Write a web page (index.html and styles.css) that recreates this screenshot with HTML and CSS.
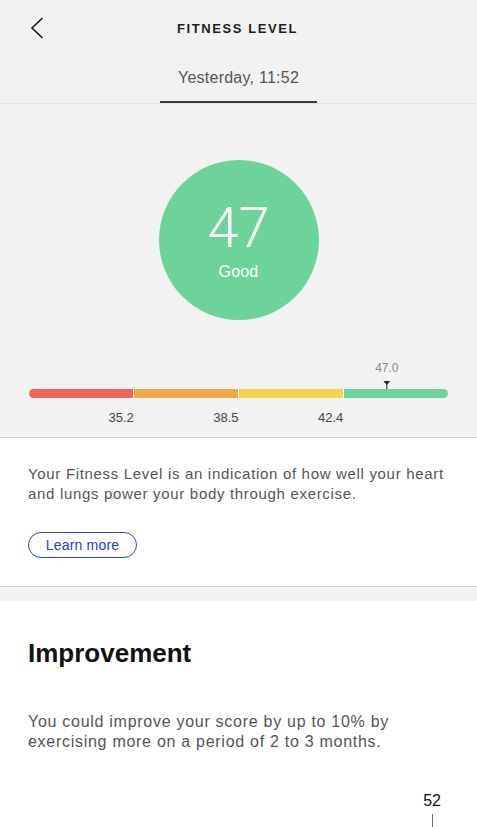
FILE: index.html
```html
<!DOCTYPE html>
<html lang="en">
<head>
<meta charset="utf-8">
<title>Fitness Level</title>
<link rel="stylesheet" href="styles.css">
</head>
<body>
<div class="screen">
  <header class="topbar">
    <button class="back" aria-label="Back">
      <svg width="14" height="22" viewBox="0 0 14 22"><path d="M12.5 1 L2 11 L12.5 21" fill="none" stroke="#1a1a1a" stroke-width="1.6"/></svg>
    </button>
    <h1 class="title">FITNESS LEVEL</h1>
    <span class="spacer"></span>
  </header>

  <nav class="tabs">
    <span class="tab active">Yesterday, 11:52</span>
  </nav>

  <section class="score">
    <div class="circle">
      <span class="value">47</span>
      <span class="grade">Good</span>
    </div>

    <div class="scale">
      <div class="marker-row">
        <div class="marker" style="left: 85.4%">
          <span class="marker-value">47.0</span>
          <svg class="pin" width="7" height="8" viewBox="0 0 7 8"><path d="M0 0 H7 L3.5 4 Z" fill="#222"/><rect x="3" y="3" width="1" height="5" fill="#222"/></svg>
        </div>
      </div>
      <div class="bar">
        <span class="seg red"></span>
        <span class="seg orange"></span>
        <span class="seg yellow"></span>
        <span class="seg green"></span>
      </div>
      <div class="ticks">
        <span>35.2</span>
        <span>38.5</span>
        <span>42.4</span>
        <span></span>
      </div>
    </div>
  </section>

  <section class="card info">
    <p class="text">Your Fitness Level is an indication of how well your heart and lungs power your body through exercise.</p>
    <button class="pill">Learn more</button>
  </section>

  <section class="card improve">
    <h2 class="heading">Improvement</h2>
    <p class="text large">You could improve your score by up to 10% by exercising more on a period of 2 to 3 months.</p>
    <div class="chart">
      <div class="goal">
        <span class="goal-value">52</span>
        <span class="goal-line"></span>
      </div>
    </div>
  </section>
</div>
</body>
</html>
```

FILE: styles.css
```css
* { box-sizing: border-box; }

html, body {
  margin: 0;
  padding: 0;
  background: #f2f2f2;
  font-family: "Liberation Sans", Arial, sans-serif;
  color: #222;
}

.screen {
  width: 477px;
  min-height: 827px;
  overflow: hidden;
}

.topbar {
  height: 56px;
  display: grid;
  grid-template-columns: 60px 1fr 60px;
  align-items: center;
}

.back {
  border: 0;
  background: none;
  padding: 0 0 0 30px;
  height: 56px;
  display: flex;
  align-items: center;
  cursor: pointer;
}

.title {
  margin: 0;
  text-align: center;
  font-size: 13px;
  font-weight: 700;
  letter-spacing: 1.6px;
  padding-right: 2px;
  color: #1e1e1e;
}

.tabs {
  height: 48px;
  display: flex;
  justify-content: center;
  border-bottom: 1px solid #e3e3e3;
}

.tab {
  padding: 12px 18px 0;
  font-size: 16px;
  line-height: 20px;
  letter-spacing: 0.25px;
  color: #555;
  border-bottom: 2px solid #3a3a3a;
  height: 47px;
}

.score {
  padding: 56px 0 11px;
  display: flex;
  flex-direction: column;
  align-items: center;
  border-bottom: 1px solid #d2d2d2;
}

.circle {
  width: 160px;
  height: 160px;
  border-radius: 50%;
  background: #6ed29b;
  display: flex;
  flex-direction: column;
  align-items: center;
  padding-top: 40px;
  color: #fff;
}

.value {
  font-family: Roboto, "Liberation Sans", sans-serif;
  font-weight: 300;
  font-size: 56px;
  line-height: 56px;
}

.grade {
  margin-top: 6px;
  font-size: 16px;
  line-height: 20px;
  letter-spacing: 0.2px;
}

.scale {
  align-self: stretch;
  margin: 41px 29px 0;
}

.marker-row {
  position: relative;
  height: 28px;
}

.marker {
  position: absolute;
  top: 0;
  transform: translateX(-50%);
  display: flex;
  flex-direction: column;
  align-items: center;
}

.marker-value {
  font-size: 12px;
  line-height: 14px;
  color: #888;
}

.pin {
  margin-top: 6px;
  display: block;
}

.bar {
  display: flex;
  gap: 1px;
  height: 9px;
  border-radius: 5px;
  overflow: hidden;
  background: #fff;
}

.seg { flex: 1; }
.red { background: #ee6655; }
.orange { background: #f2a64a; }
.yellow { background: #f4d34f; }
.green { background: #6ed29b; }

.ticks {
  display: grid;
  grid-template-columns: repeat(4, 1fr);
  margin-top: 12px;
  font-size: 13px;
  line-height: 16px;
  color: #444;
}

.ticks span { text-align: right; }

.card {
  background: #fff;
  padding: 0 28px;
}

.info {
  padding-top: 26px;
  padding-bottom: 28px;
  border-bottom: 1px solid #d2d2d2;
}

.text {
  margin: 0;
  font-size: 15px;
  line-height: 20px;
  letter-spacing: 0.68px;
  color: #555;
}

.text.large {
  font-size: 16px;
  letter-spacing: 0.72px;
}

.pill {
  margin-top: 28px;
  height: 26px;
  width: 109px;
  border: 1.5px solid #2a45cf;
  border-radius: 13px;
  background: #fff;
  color: #2342c8;
  font-family: "Liberation Sans", Arial, sans-serif;
  font-size: 14px;
  letter-spacing: 0.2px;
  padding: 0;
  display: flex;
  align-items: center;
  justify-content: center;
}

.improve {
  margin-top: 14px;
  padding-top: 36px;
  min-height: 226px;
}

.heading {
  margin: 0 0 43px;
  font-size: 26px;
  line-height: 32px;
  font-weight: 700;
  color: #111;
}

.chart {
  display: flex;
  justify-content: flex-end;
  padding: 40px 8px 0 0;
}

.goal {
  display: flex;
  flex-direction: column;
  align-items: center;
  gap: 4px;
}

.goal-value {
  font-size: 16px;
  line-height: 18px;
  color: #111;
}

.goal-line {
  width: 1px;
  height: 15px;
  background: #666;
}
```
